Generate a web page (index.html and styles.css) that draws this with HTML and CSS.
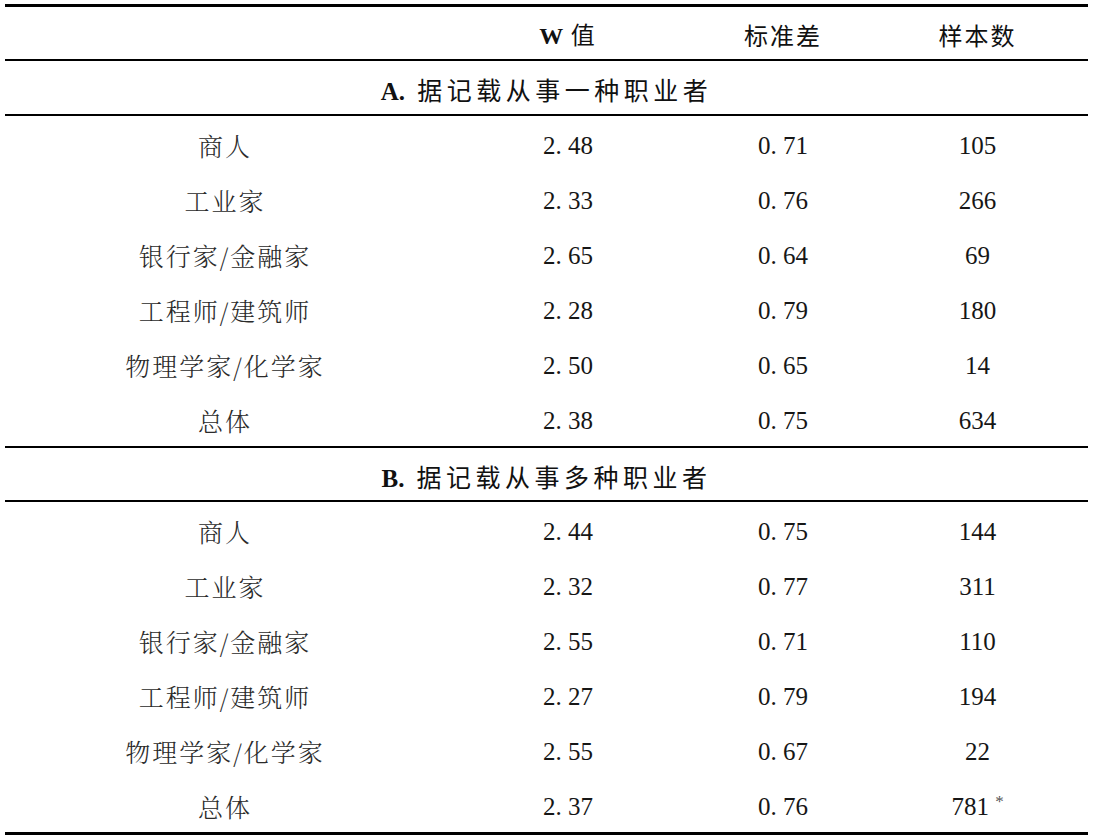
FILE: index.html
```html
<!DOCTYPE html>
<html lang="zh-CN">
<head>
<meta charset="utf-8">
<title>职业与W值</title>
<link rel="stylesheet" href="styles.css">
</head>
<body>
<table class="stats">
  <colgroup>
    <col class="c-label">
    <col class="c-w">
    <col class="c-sd">
    <col class="c-n">
  </colgroup>
  <thead>
    <tr class="head">
      <th></th>
      <th><b class="latin">W</b> 值</th>
      <th>标准差</th>
      <th class="last">样本数</th>
    </tr>
  </thead>
  <tbody>
    <tr class="section">
      <td colspan="4"><b class="latin">A.</b> 据记载从事一种职业者</td>
    </tr>
    <tr class="row"><td class="label">商人</td><td>2. 48</td><td>0. 71</td><td class="last">105</td></tr>
    <tr class="row"><td class="label">工业家</td><td>2. 33</td><td>0. 76</td><td class="last">266</td></tr>
    <tr class="row"><td class="label">银行家/金融家</td><td>2. 65</td><td>0. 64</td><td class="last">69</td></tr>
    <tr class="row"><td class="label">工程师/建筑师</td><td>2. 28</td><td>0. 79</td><td class="last">180</td></tr>
    <tr class="row"><td class="label">物理学家/化学家</td><td>2. 50</td><td>0. 65</td><td class="last">14</td></tr>
    <tr class="row end"><td class="label">总体</td><td>2. 38</td><td>0. 75</td><td class="last">634</td></tr>
    <tr class="section b">
      <td colspan="4"><b class="latin">B.</b> 据记载从事多种职业者</td>
    </tr>
    <tr class="row"><td class="label">商人</td><td>2. 44</td><td>0. 75</td><td class="last">144</td></tr>
    <tr class="row"><td class="label">工业家</td><td>2. 32</td><td>0. 77</td><td class="last">311</td></tr>
    <tr class="row"><td class="label">银行家/金融家</td><td>2. 55</td><td>0. 71</td><td class="last">110</td></tr>
    <tr class="row"><td class="label">工程师/建筑师</td><td>2. 27</td><td>0. 79</td><td class="last">194</td></tr>
    <tr class="row"><td class="label">物理学家/化学家</td><td>2. 55</td><td>0. 67</td><td class="last">22</td></tr>
    <tr class="row final"><td class="label">总体</td><td>2. 37</td><td>0. 76</td><td class="last">781 <sup class="star">*</sup></td></tr>
  </tbody>
</table>
</body>
</html>
```
FILE: styles.css
```css
html, body {
  margin: 0;
  padding: 0;
  background: #ffffff;
}

body {
  color: #111;
  font-family: "Liberation Serif", "Noto Serif CJK SC", "Noto Sans CJK SC", serif;
}

.stats {
  margin: 4px 0 0 5px;
  width: 1083px;
  border-collapse: collapse;
  table-layout: fixed;
  border-top: 3px solid #000;
  border-bottom: 3px solid #000;
}

.c-label { width: 440px; }
.c-w { width: 246px; }
.c-sd { width: 184px; }
.c-n { width: 213px; }

.stats th,
.stats td {
  padding: 0;
  text-align: center;
  vertical-align: middle;
  font-size: 25px;
  line-height: 1;
  white-space: nowrap;
}

.stats .last {
  padding-right: 8px;
}

.head th {
  height: 48px;
  padding-top: 4px;
  font-weight: normal;
  font-family: "Noto Sans CJK SC", "Liberation Sans", sans-serif;
  font-size: 24px;
  letter-spacing: 2px;
  color: #111;
  border-bottom: 2px solid #000;
}

.latin {
  font-family: "Liberation Serif", serif;
  font-weight: bold;
  letter-spacing: 0;
}

.section td {
  height: 48px;
  font-family: "Noto Sans CJK SC", "Liberation Sans", sans-serif;
  font-size: 25px;
  letter-spacing: 4.5px;
  padding-top: 5px;
  border-bottom: 2px solid #000;
}

.section td .latin {
  margin-right: 2px;
}

.section.b td {
  height: 46px;
  padding-top: 6px;
}

.row td {
  height: 52px;
  padding-top: 3px;
  font-family: "Liberation Serif", "Noto Serif CJK SC", "Noto Sans CJK SC", serif;
  color: #161616;
}

.row td.label {
  font-family: "Noto Serif CJK SC", "Noto Sans CJK SC", "Liberation Serif", serif;
  font-weight: 300;
  letter-spacing: 2px;
  color: #2a2a2a;
}

.row.end td {
  border-bottom: 2px solid #000;
}

.star {
  font-size: 17px;
  vertical-align: 8px;
  line-height: 0;
  color: #555;
}
```
